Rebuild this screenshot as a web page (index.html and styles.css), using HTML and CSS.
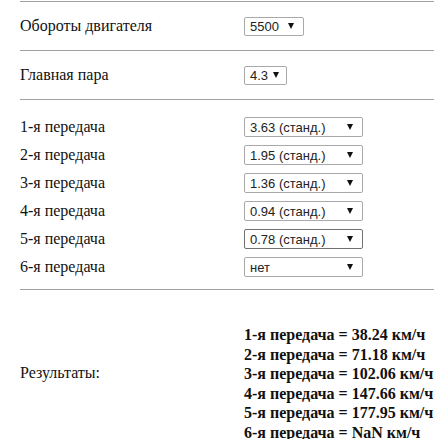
FILE: index.html
```html
<!DOCTYPE html>
<html lang="ru">
<head>
  <meta charset="UTF-8" />
  <title>Калькулятор скорости</title>
  <link rel="stylesheet" href="styles.css">
</head>
<body>
  <div class="calc">
    <div class="line"></div>

    <!-- Engine -->
    <div class="row top-row">
      <div class="label">Обороты двигателя</div>
      <div class="field"><span class="select rpm"><span class="value">5500</span><span class="arrow"></span></span></div>
    </div>
    <div class="line"></div>

    <div class="row top-row">
      <div class="label">Главная пара</div>
      <div class="field"><span class="select ratio"><span class="value">4.3</span><span class="arrow"></span></span></div>
    </div>
    <div class="line"></div>

    <!-- Gears -->
    <div class="gears">
      <div class="row gear-row">
        <div class="label">1-я передача</div>
        <div class="field"><span class="select gear"><span class="value">3.63 (станд.)</span><span class="arrow"></span></span></div>
      </div>
      <div class="row gear-row">
        <div class="label">2-я передача</div>
        <div class="field"><span class="select gear"><span class="value">1.95 (станд.)</span><span class="arrow"></span></span></div>
      </div>
      <div class="row gear-row">
        <div class="label">3-я передача</div>
        <div class="field"><span class="select gear"><span class="value">1.36 (станд.)</span><span class="arrow"></span></span></div>
      </div>
      <div class="row gear-row">
        <div class="label">4-я передача</div>
        <div class="field"><span class="select gear"><span class="value">0.94 (станд.)</span><span class="arrow"></span></span></div>
      </div>
      <div class="row gear-row">
        <div class="label">5-я передача</div>
        <div class="field"><span class="select gear focused"><span class="value">0.78 (станд.)</span><span class="arrow"></span></span></div>
      </div>
      <div class="row gear-row">
        <div class="label">6-я передача</div>
        <div class="field"><span class="select gear"><span class="value">нет</span><span class="arrow"></span></span></div>
      </div>
    </div>
    <div class="line"></div>

    <!-- Results -->
    <div class="row results">
      <div class="label result-label">Результаты:</div>
      <div class="field result-list">
        1-я передача = 38.24 км/ч<br>
        2-я передача = 71.18 км/ч<br>
        3-я передача = 102.06 км/ч<br>
        4-я передача = 147.66 км/ч<br>
        5-я передача = 177.95 км/ч<br>
        6-я передача = NaN км/ч
      </div>
    </div>
  </div>
</body>
</html>
```

FILE: styles.css
```css
body {
  margin: 0;
  padding: 0;
  background-color: #fff;
  font-family: "Liberation Serif", "Times New Roman", serif;
  font-size: 16px;
  color: #111;
}
.calc {
  padding: 1px 0 0 20px;
}
.line {
  border-top: 1px solid #a0a0a0;
}
.row {
  display: flex;
  align-items: center;
}
.label {
  width: 224px;
  flex-shrink: 0;
}
.top-row {
  height: 48px;
}
.gears {
  padding: 13px 0 8px 0;
}
.gear-row {
  height: 28px;
}
.select {
  display: flex;
  align-items: center;
  box-sizing: border-box;
  height: 20px;
  padding-left: 5px;
  border: 1px solid #a9a9a9;
  border-radius: 2px;
  background-color: #fff;
  font-family: "Liberation Sans", Arial, sans-serif;
  font-size: 13px;
  color: #222;
}
.select .value {
  flex: 1;
}
.select .arrow {
  width: 0;
  height: 0;
  margin-right: 9px;
  border-left: 3.5px solid transparent;
  border-right: 3.5px solid transparent;
  border-top: 6px solid #111;
}
.select.rpm {
  width: 60px;
  height: 19px;
}
.select.ratio {
  width: 43px;
  height: 19px;
}
.select.ratio .arrow {
  margin-right: 7px;
}
.select.gear {
  width: 119px;
}
.select.focused {
  border-color: #707070;
}
.results {
  align-items: flex-start;
  padding-top: 35px;
}
.result-label {
  padding-top: 39px;
}
.result-list {
  font-weight: bold;
  line-height: 19.6px;
}
```
